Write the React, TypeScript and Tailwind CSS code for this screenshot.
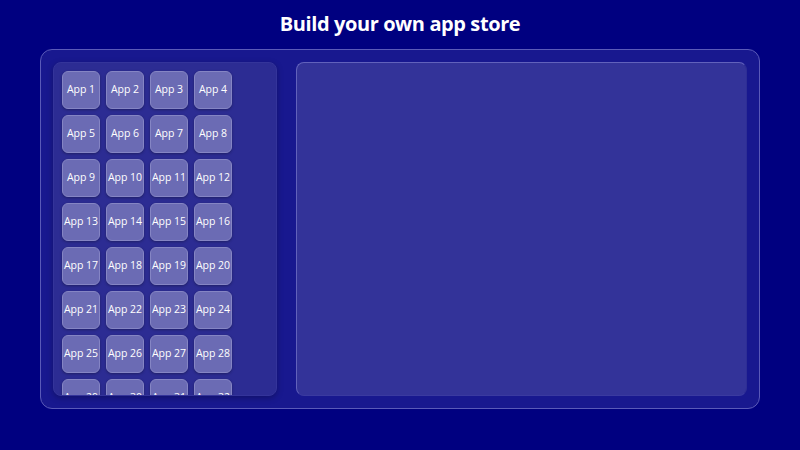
const apps = Array.from({ length: 36 }, (_, i) => `App ${i + 1}`)

export default function App() {
  return (
    <div
      className="w-[800px] h-[450px] bg-[#000080] flex flex-col items-center overflow-hidden"
      style={{ fontFamily: '"Open Sans", "Noto Sans", sans-serif' }}
    >
      <h1 className="mt-[8px] h-[32px] leading-[32px] text-[20px] font-bold text-white tracking-[-0.4px]">
        Build your own app store
      </h1>
      <div className="mt-[9px] w-[720px] h-[360px] rounded-[12px] border border-[#5a5ab8] bg-[#18188f] p-[12px] flex gap-[19px]">
        <div className="w-[224px] h-full rounded-[8px] bg-[#2c2c93] border border-[#34349a] overflow-hidden shadow-[0_2px_6px_rgba(0,0,0,0.25)]">
          <div className="grid grid-cols-[repeat(4,38px)] gap-[6px] pt-[8px] pl-[8px]">
            {apps.map((a) => (
              <div
                key={a}
                className="w-[38px] h-[38px] rounded-[6px] bg-[#6b6bb4] border border-[#8585c4] flex items-center justify-center text-[10.5px] text-white whitespace-nowrap shadow-[0_1px_3px_rgba(0,0,0,0.3)]"
              >
                {a}
              </div>
            ))}
          </div>
        </div>
        <div className="flex-1 h-full rounded-[8px] bg-[#333399] border border-[#6262bb] border-r-[#2e2e95] border-b-[#3a3aa0]" />
      </div>
    </div>
  )
}
